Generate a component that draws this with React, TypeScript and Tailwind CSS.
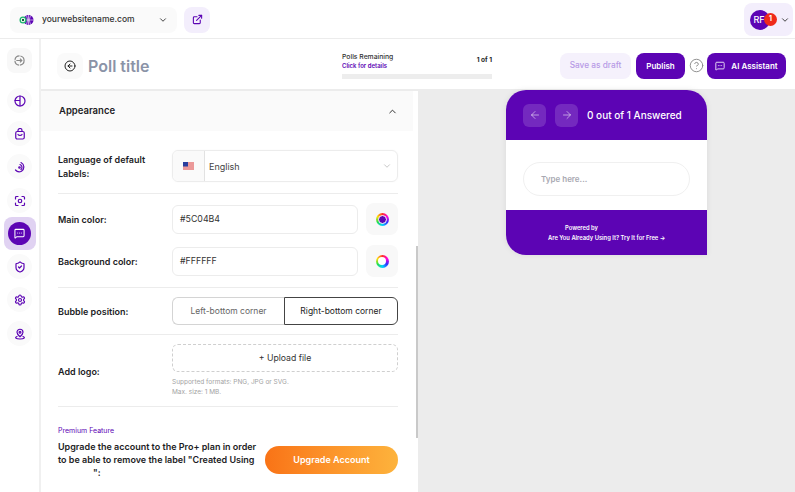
import React from "react";
import { ArrowLeft, ArrowRight, ChevronDown, ChevronUp, CircleArrowLeft, ExternalLink, MessageSquareMore, CircleHelp, ShieldCheck, Settings } from "lucide-react";

const font = { fontFamily: "Inter, 'Noto Sans', sans-serif" };

function SideBtn({ children }: { children: React.ReactNode }) {
  return <div className="flex h-[25px] w-[25px] items-center justify-center rounded-full bg-[#fafafa] text-[#5c04b4]">{children}</div>;
}

function Ic({ children }: { children: React.ReactNode }) {
  return (
    <svg width="12" height="12" viewBox="0 0 24 24" fill="none" stroke="currentColor" strokeWidth="2.400" strokeLinecap="round" strokeLinejoin="round">
      {children}
    </svg>
  );
}

function Ring({ inner }: { inner?: boolean }) {
  return (
    <div className="flex h-8 w-8 shrink-0 items-center justify-center rounded-lg bg-[#f8f8f8]">
      <div className="flex h-[13px] w-[13px] items-center justify-center rounded-full bg-[conic-gradient(#ff2d2d,#ff00e0,#3030ff,#00d0ff,#20e050,#ffe000,#ff2d2d)]">
        <div className={inner ? "h-[9px] w-[9px] rounded-full border border-white bg-[#5c04b4]" : "h-[8px] w-[8px] rounded-full bg-white"} />
      </div>
    </div>
  );
}

function Label({ children }: { children: React.ReactNode }) {
  return <div className="w-[114px] shrink-0 text-[9px] font-semibold leading-[13px] text-[#1d1d25]">{children}</div>;
}

export default function App() {
  return (
    <div style={font} className="flex h-[492px] w-[795px] flex-col overflow-hidden bg-white text-[#1d1d25]">
      <header className="flex h-[39px] shrink-0 items-center border-b border-[#ececec] pl-[10px] pr-[2px] pt-[1px]">
        <div className="flex h-[26px] w-[167px] items-center rounded-lg bg-[#fafafa] pl-[9px] pr-[9px]">
          <svg width="15" height="12" viewBox="0 0 15 12" className="shrink-0">
            <circle cx="9.500" cy="6" r="5" fill="#5c04b4" />
            <path d="M9.500 1v10M4.500 6h10M7.500 1.500q2.500 4.500 0 9M11.500 1.500q-2.500 4.500 0 9" stroke="#fff" strokeWidth=".6" fill="none" />
            <circle cx="4" cy="6" r="3.500" fill="#19b56b" />
            <circle cx="4" cy="6" r="2.200" fill="#fff" />
            <circle cx="4" cy="6" r="1.200" fill="#0e5a3a" />
          </svg>
          <span className="ml-[8px] text-[8.500px] font-medium text-[#333]">yourwebsitename.com</span>
          <ChevronDown className="ml-auto h-[10px] w-[10px] text-[#222]" strokeWidth={2} />
        </div>
        <div className="ml-[7px] flex h-[26px] w-[26px] items-center justify-center rounded-lg bg-[#f3eefc]">
          <ExternalLink className="h-[11px] w-[11px] text-[#5c04b4]" strokeWidth={2.400} />
        </div>
        <div className="ml-auto flex h-[33px] w-[49px] items-center rounded-lg bg-[#f3eefc] pl-[6px]">
          <div className="relative flex h-[20px] w-[20px] items-center justify-center rounded-full bg-[#5c04b4] text-[9px] font-medium text-white">
            <span className="-ml-[2px]">RF</span>
            <div className="absolute left-[14px] top-[3px] flex h-[13px] w-[13px] items-center justify-center rounded-full bg-[#ef2a1a] text-[7px] font-bold text-white">1</div>
          </div>
          <ChevronDown className="ml-[10px] h-[10px] w-[10px] text-[#222]" strokeWidth={2} />
        </div>
      </header>

      <div className="flex min-h-0 flex-1">
        <aside className="flex w-[41px] shrink-0 flex-col items-center border-r-2 border-[#f0f0f0] pt-[9px]">
          <div className="flex h-[25px] w-[25px] items-center justify-center rounded-lg bg-[#f8f8f8]">
            <svg width="11" height="11" viewBox="0 0 24 24" fill="none" stroke="#888" strokeWidth="2.600"><circle cx="12" cy="12" r="10" strokeDasharray="14 2" /><path d="M5 12h12M13 8l4 4-4 4" /></svg>
          </div>
          <div className="mt-[15px]"><SideBtn><Ic><circle cx="12" cy="12" r="10" /><path d="M12 2v20M2 11h10" /></Ic></SideBtn></div>
          <div className="mt-[8px]"><SideBtn><Ic><path d="M8 7V5a4 4 0 0 1 8 0v2" /><rect x="3.500" y="7" width="17" height="15" rx="3" /><path d="M8 13c1.500 2.500 6.500 2.500 8 0" /></Ic></SideBtn></div>
          <div className="mt-[8px]"><SideBtn><Ic><circle cx="11" cy="13" r="1.500" /><path d="M12 7a6 6 0 0 1 2 10 M14 3a10 10 0 0 1 1 17.500A10 10 0 0 1 3 18" /></Ic></SideBtn></div>
          <div className="mt-[9px]"><SideBtn><Ic><path d="M3 8V5a2 2 0 0 1 2-2h3M16 3h3a2 2 0 0 1 2 2v3M21 16v3a2 2 0 0 1-2 2h-3M8 21H5a2 2 0 0 1-2-2v-3" /><circle cx="12" cy="12" r="3.500" /></Ic></SideBtn></div>
          <div className="mt-[4px] flex h-[33px] w-[32px] items-center justify-center rounded-lg bg-[#e0d2f2]">
            <div className="flex h-[23px] w-[23px] items-center justify-center rounded-full bg-[#5c04b4] text-white">
              <MessageSquareMore className="h-[11px] w-[11px]" strokeWidth={2.200} />
            </div>
          </div>
          <div className="mt-[4px]"><SideBtn><ShieldCheck className="h-[12px] w-[12px]" strokeWidth={2.400} /></SideBtn></div>
          <div className="mt-[8px]"><SideBtn><Settings className="h-[12px] w-[12px]" strokeWidth={2.400} /></SideBtn></div>
          <div className="mt-[9px]"><SideBtn><Ic><path d="M18 8.500c0 4-6 9-6 9s-6-5-6-9a6 6 0 0 1 12 0z" /><circle cx="12" cy="8.500" r="1.800" /><path d="M6 17c-5 2-3 5 6 5s11-3 6-5" /></Ic></SideBtn></div>
        </aside>

        <div className="flex min-w-0 flex-1 flex-col">
          <div className="flex h-[52px] shrink-0 items-center border-b-2 border-[#ececec] pl-[16px] pr-[9px] pt-[3px]">
            <div className="flex h-[26px] w-[26px] items-center justify-center rounded-lg bg-[#fafafa]">
              <CircleArrowLeft className="h-[12px] w-[12px] text-[#222]" strokeWidth={2} />
            </div>
            <span className="ml-[5px] w-[62px] text-[16px] font-semibold whitespace-nowrap text-[#8b93a7]">Poll title</span>
            <div className="ml-[192px] w-[150px]">
              <div className="flex items-start justify-between">
                <div>
                  <div className="text-[6.800px] font-medium leading-[8px] text-[#333]">Polls Remaining</div>
                  <div className="mt-[1px] text-[6px] font-semibold leading-[7px] text-[#5c04b4]">Click for details</div>
                </div>
                <div className="text-[6.500px] font-bold leading-[14px] text-[#222]">1 of 1</div>
              </div>
              <div className="mt-[5px] h-[5px] bg-[#ededed]" />
            </div>
            <div className="ml-auto flex items-center">
              <div className="flex h-[26px] w-[71px] items-center justify-center rounded-lg bg-[#f5f1fc] text-[8.300px] font-medium text-[#b79ae6]">Save as draft</div>
              <div className="ml-[5px] flex h-[26px] w-[49px] items-center justify-center rounded-lg bg-[#5c04b4] text-[8px] font-semibold text-white">Publish</div>
              <CircleHelp className="ml-[4px] h-[15px] w-[15px] text-[#8a8a8a]" strokeWidth={1.500} />
              <div className="ml-[3px] flex h-[26px] w-[79px] items-center justify-center gap-[6px] rounded-lg bg-[#5c04b4] text-[8px] font-semibold text-white">
                <MessageSquareMore className="h-[10px] w-[10px]" strokeWidth={2} />
                AI Assistant
              </div>
            </div>
          </div>

          <div className="flex min-h-0 flex-1">
            <div className="relative w-[377px] shrink-0 overflow-hidden">
              <div className="absolute right-0 top-[155px] h-[192px] w-[2px] bg-[#c9c9c9]" />
              <div className="mr-[5px] flex h-[40px] items-center justify-between bg-[#fafafa] pl-[18px] pr-[15px] pt-[1px]">
                <span className="text-[9.500px] font-semibold text-[#1d1d25]">Appearance</span>
                <ChevronUp className="h-[11px] w-[11px] text-[#222]" strokeWidth={2} />
              </div>
              <div className="ml-[17px] mr-[20px] flex flex-col">
                <div className="flex h-[63px] items-start border-b border-[#ececec] pt-[19px]">
                  <Label><div className="mt-[3px]">Language of default<br /><span className="mt-[1px] block">Labels:</span></div></Label>
                  <div className="flex h-[32px] w-[226px] items-center rounded-md border border-[#ececec] shadow-[0_0_2px_rgba(0,0,0,0.04)]">
                    <div className="flex h-full w-[32px] items-center justify-center rounded-l-md border-r border-[#e2e2e2] bg-[#fafafa]">
                      <svg width="11" height="8" viewBox="0 0 11 8">
                        <rect width="11" height="8" fill="#f2c6c6" />
                        <path d="M0 1h11M0 3h11M0 5h11M0 7h11" stroke="#e25555" strokeWidth=".8" />
                        <rect width="5" height="4.500" fill="#2a3f9e" />
                      </svg>
                    </div>
                    <span className="ml-[4px] pt-[1px] text-[9px] text-[#444]">English</span>
                    <ChevronDown className="ml-auto mr-[5px] h-[10px] w-[10px] text-[#b5b5b5]" strokeWidth={1.800} />
                  </div>
                </div>
                <div className="mt-[9px] flex h-[32px] items-center">
                  <Label>Main color:</Label>
                  <div className="flex h-[29px] w-[186px] items-center rounded-md border border-[#ececec] pl-[7px] text-[8.800px] text-[#333]">#5C04B4</div>
                  <div className="ml-[8px]"><Ring inner /></div>
                </div>
                <div className="mt-[10px] flex h-[32px] items-center">
                  <Label>Background color:</Label>
                  <div className="flex h-[29px] w-[186px] items-center rounded-md border border-[#ececec] pl-[7px] text-[8.800px] text-[#333]">#FFFFFF</div>
                  <div className="ml-[8px]"><Ring /></div>
                </div>
                <div className="mt-[10px] flex h-[48px] items-center border-y border-[#ececec]">
                  <Label>Bubble position:</Label>
                  <div className="flex h-[28px] w-[226px] text-[8.500px]">
                    <div className="flex w-[112px] items-center justify-center rounded-l-md border border-r-0 border-[#d4d4d4] text-[#666]">Left-bottom corner</div>
                    <div className="flex flex-1 items-center justify-center rounded-r-md border-[1.500px] border-[#444] text-[#222]">Right-bottom corner</div>
                  </div>
                </div>
                <div className="flex h-[72px] items-center border-b border-[#ececec]">
                  <div className="pt-[1px]"><Label>Add logo:</Label></div>
                  <div className="w-[226px]">
                    <div className="flex h-[28px] items-center justify-center rounded-md border border-dashed border-[#cfcfcf] pt-[2px] text-[8.700px] text-[#333]">+ Upload file</div>
                    <div className="mt-[5px] text-[6.500px] leading-[10px] text-[#a3a3a3]">Supported formats: PNG, JPG or SVG.<br />Max. size: 1 MB.</div>
                  </div>
                </div>
                <div className="mt-[19px] text-[7px] leading-[9px] text-[#5c04b4]">Premium Feature</div>
                <div className="mt-[5px] flex items-center justify-between">
                  <div className="text-[9px] font-semibold leading-[13px] whitespace-nowrap text-[#1d1d25]">
                    Upgrade the account to the Pro+ plan in order<br />to be able to remove the label "Created Using<br /><span className="ml-[35px]">":</span>
                  </div>
                  <div className="flex h-[28px] w-[133px] items-center justify-center rounded-full bg-gradient-to-r from-[#f97316] to-[#fdb33c] text-[9px] font-semibold text-white">Upgrade Account</div>
                </div>
              </div>
            </div>

            <div className="min-w-0 flex-1 bg-[#ececec] pl-[88px]">
              <div className="-mt-[1px] w-[201px] overflow-hidden rounded-t-[20px] rounded-bl-[20px] bg-white shadow-[0_0_6px_rgba(0,0,0,0.08)]">
                <div className="flex h-[50px] items-center bg-[#5c04b4] pl-[17px]">
                  <div className="flex h-[23px] w-[23px] items-center justify-center rounded-md bg-white/15">
                    <ArrowLeft className="h-[12px] w-[12px] text-white/60" strokeWidth={1.800} />
                  </div>
                  <div className="ml-[9px] flex h-[23px] w-[23px] items-center justify-center rounded-md bg-white/15">
                    <ArrowRight className="h-[12px] w-[12px] text-white/60" strokeWidth={1.800} />
                  </div>
                  <span className="ml-[9px] text-[10px] font-medium text-white">0 out of 1 Answered</span>
                </div>
                <div className="flex h-[70px] items-center justify-center pt-[8px]">
                  <div className="flex h-[34px] w-[167px] items-center rounded-full border border-[#f0f0f0] pl-[17px] text-[8px] font-semibold text-[#a9a9b2]">Type here...</div>
                </div>
                <div className="flex h-[45px] flex-col bg-[#5c04b4] pl-[42px] pt-[13px] text-[5.800px] font-semibold leading-[10px] text-white">
                  <span className="pl-[17px]">Powered by</span>
                  <span>Are You Already Using It? Try It for Free →</span>
                </div>
              </div>
            </div>
          </div>
        </div>
      </div>
    </div>
  );
}
